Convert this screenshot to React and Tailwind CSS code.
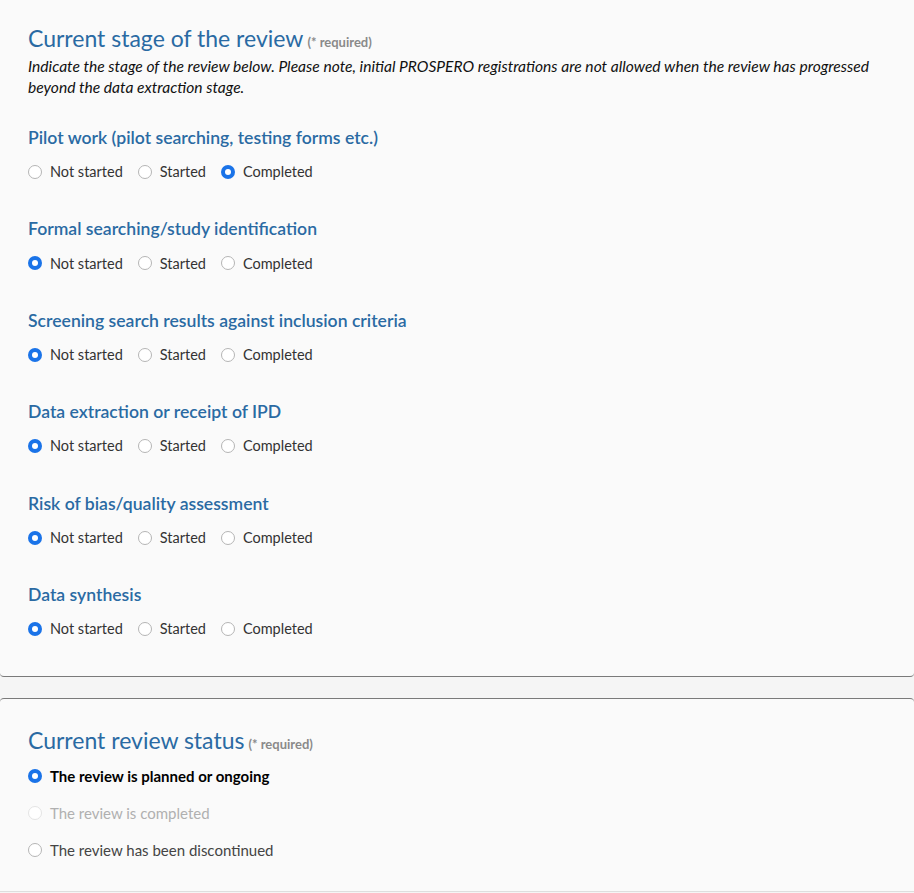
const stages = [
  { title: "Pilot work (pilot searching, testing forms etc.)", value: 2 },
  { title: "Formal searching/study identification", value: 0 },
  { title: "Screening search results against inclusion criteria", value: 0 },
  { title: "Data extraction or receipt of IPD", value: 0 },
  { title: "Risk of bias/quality assessment", value: 0 },
  { title: "Data synthesis", value: 0 },
];

const options = ["Not started", "Started", "Completed"];

const Radio = ({ checked, disabled }) => (
  <span
    className={
      checked
        ? "w-[14px] h-[14px] rounded-full bg-[#1a73e8] flex items-center justify-center shrink-0"
        : disabled
        ? "w-[14px] h-[14px] rounded-full border border-[#e4e4e4] bg-white shrink-0"
        : "w-[14px] h-[14px] rounded-full border border-[#b5b5b5] bg-white shrink-0"
    }
  >
    {checked && <span className="w-[6px] h-[6px] rounded-full bg-white" />}
  </span>
);

const Required = () => (
  <span className="text-[13px] font-bold text-[#8a8a8a] ml-1">(* required)</span>
);

const StageRow = ({ title, value }) => (
  <div className="mb-[34.4px]">
    <h3 className="text-[17.6px] font-semibold text-[#2a6aa3] leading-[24px]">{title}</h3>
    <div className="flex items-center gap-[15px] mt-[11px] h-[22px]">
      {options.map((opt, i) => (
        <label key={opt} className="flex items-center gap-[8px] text-[14.5px] text-[#333]">
          <Radio checked={i === value} />
          {opt}
        </label>
      ))}
    </div>
  </div>
);

const App = () => {
  return (
    <div className="min-h-[893px] bg-[#f5f5f5] font-['Lato',sans-serif]">
      <section className="bg-[#fafafa] border-b border-[#7a7a7a] rounded-b-[4px] px-[28px] pt-[25px] pb-[2px]">
        <h2 className="text-[23px] text-[#2a6aa3] leading-[26px]">
          Current stage of the review
          <Required />
        </h2>
        <p className="italic text-[15.6px] text-[#111] leading-[21px] mt-[1px]">
          Indicate the stage of the review below. Please note, initial PROSPERO registrations are not allowed when the
          review has progressed beyond the data extraction stage.
        </p>
        <div className="mt-[28px]">
          {stages.map((s) => (
            <StageRow key={s.title} {...s} />
          ))}
        </div>
      </section>

      <div className="h-[21px]" />

      <section className="bg-[#fafafa] border-t border-[#7a7a7a] border-b border-b-[#dedede] rounded-t-[4px] px-[28px] pt-[26px] pb-[30px]">
        <h2 className="text-[23px] text-[#2a6aa3] leading-[30px]">
          Current review status
          <Required />
        </h2>
        <div className="flex flex-col gap-[15px] mt-[6px]">
          <label className="flex items-center gap-[8px] text-[15px] font-bold text-black h-[22px]">
            <Radio checked />
            The review is planned or ongoing
          </label>
          <label className="flex items-center gap-[8px] text-[15px] text-[#b0b0b0] h-[22px]">
            <Radio disabled />
            The review is completed
          </label>
          <label className="flex items-center gap-[8px] text-[15px] text-[#444] h-[22px]">
            <Radio />
            The review has been discontinued
          </label>
        </div>
      </section>
    </div>
  );
};

export default App;
